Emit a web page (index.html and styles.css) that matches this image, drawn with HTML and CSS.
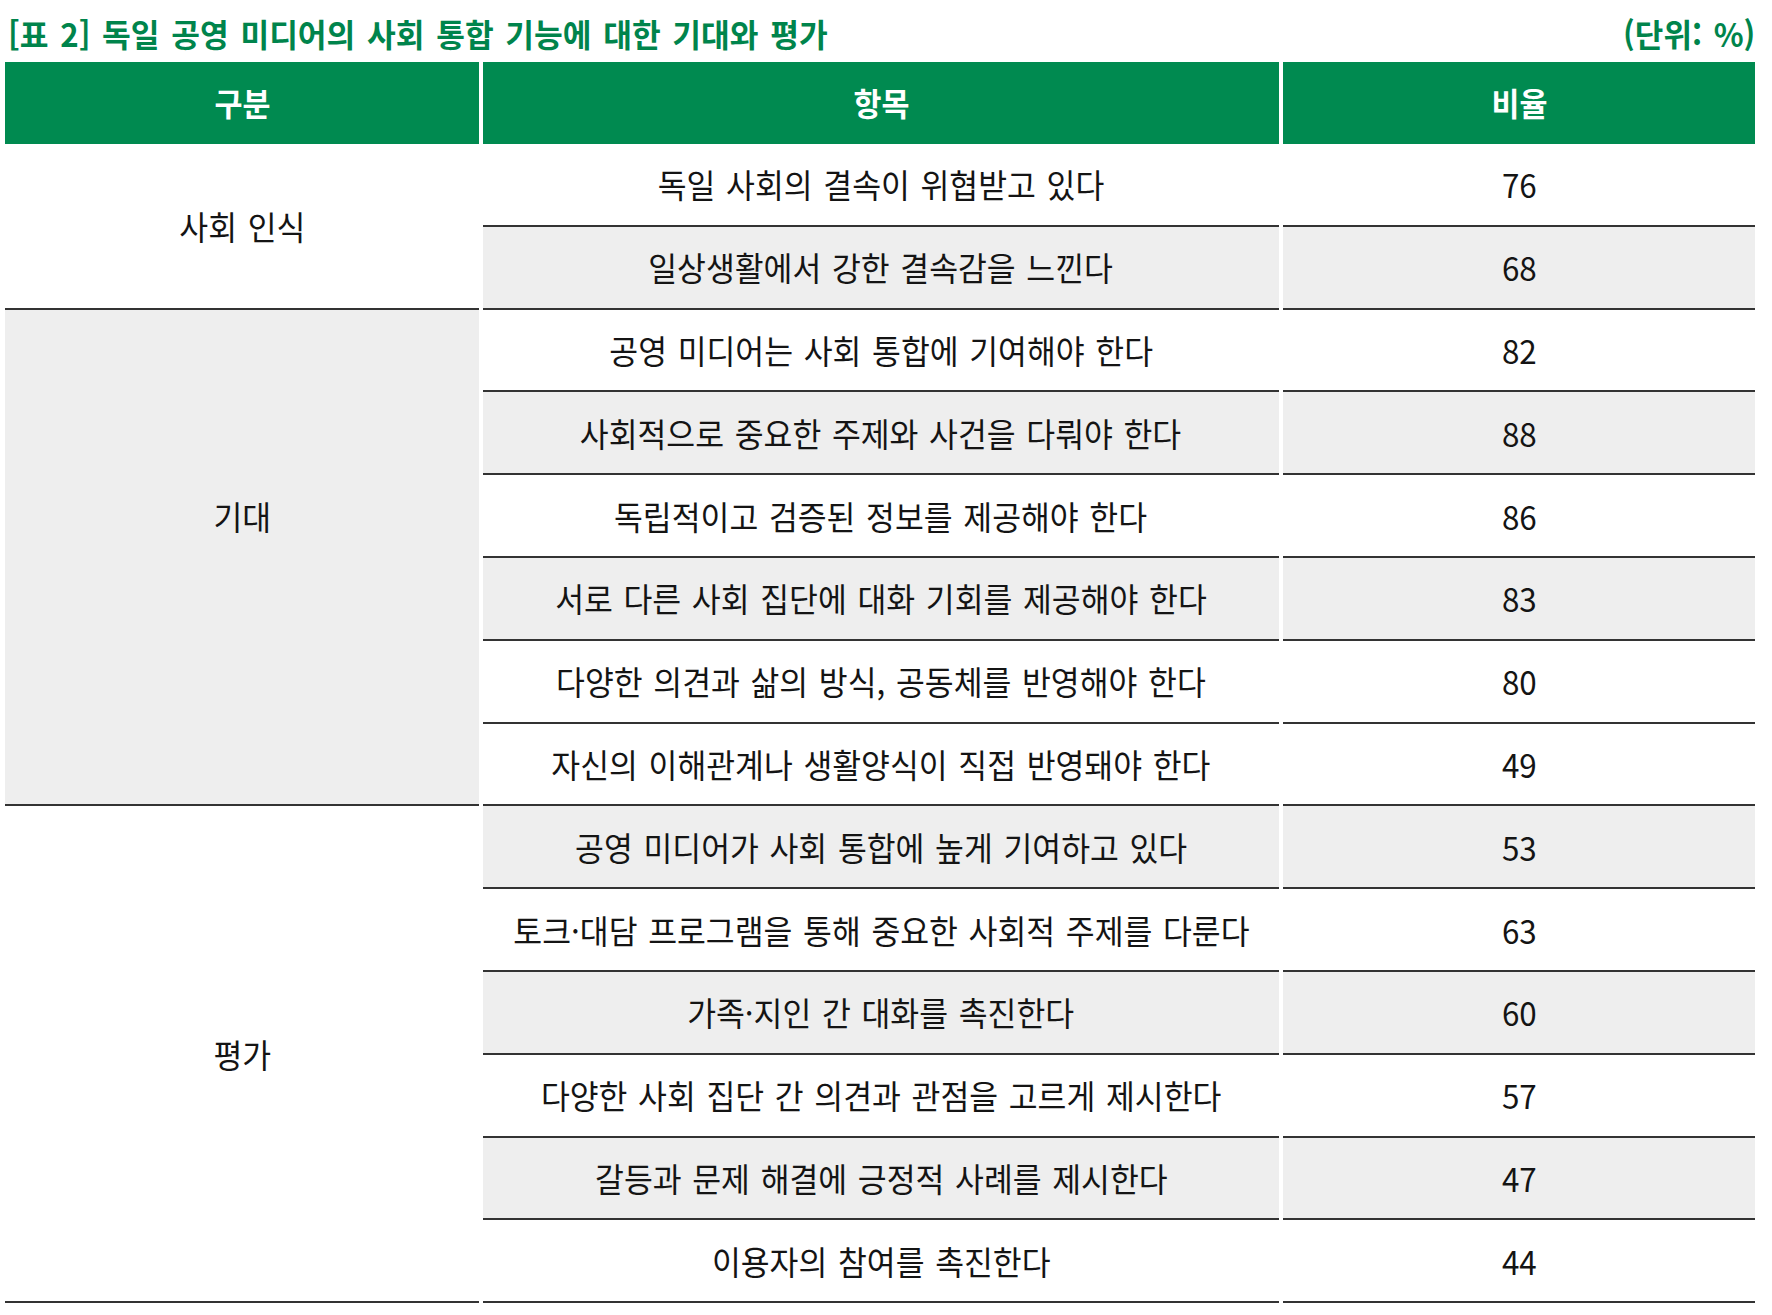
FILE: index.html
```html
<!DOCTYPE html>
<html lang="ko">
<head>
<meta charset="utf-8">
<title>표 2</title>
<link rel="stylesheet" href="styles.css">
</head>
<body>
<div class="page">
  <div class="caption">
    <span class="title"><span class="sq-l">[표 2] 독일 공영 미디어의 사회 통합 기능에 대한 기대와 평가</span></span>
    <span class="unit"><span class="sq-r">(단위: %)</span></span>
  </div>
  <div class="table">
    <div class="th"><span class="sq">구분</span></div>
    <div class="th"><span class="sq">항목</span></div>
    <div class="th"><span class="sq">비율</span></div>

    <div class="cat span2"><span class="sq">사회 인식</span></div>
    <div class="item"><span class="sq">독일 사회의 결속이 위협받고 있다</span></div>
    <div class="val"><span class="sq">76</span></div>
    <div class="item gray"><span class="sq">일상생활에서 강한 결속감을 느낀다</span></div>
    <div class="val gray"><span class="sq">68</span></div>

    <div class="cat span6 gray up"><span class="sq">기대</span></div>
    <div class="item"><span class="sq">공영 미디어는 사회 통합에 기여해야 한다</span></div>
    <div class="val"><span class="sq">82</span></div>
    <div class="item gray"><span class="sq">사회적으로 중요한 주제와 사건을 다뤄야 한다</span></div>
    <div class="val gray"><span class="sq">88</span></div>
    <div class="item"><span class="sq">독립적이고 검증된 정보를 제공해야 한다</span></div>
    <div class="val"><span class="sq">86</span></div>
    <div class="item gray"><span class="sq">서로 다른 사회 집단에 대화 기회를 제공해야 한다</span></div>
    <div class="val gray"><span class="sq">83</span></div>
    <div class="item"><span class="sq">다양한 의견과 삶의 방식, 공동체를 반영해야 한다</span></div>
    <div class="val"><span class="sq">80</span></div>
    <div class="item"><span class="sq">자신의 이해관계나 생활양식이 직접 반영돼야 한다</span></div>
    <div class="val"><span class="sq">49</span></div>

    <div class="cat span6"><span class="sq">평가</span></div>
    <div class="item gray"><span class="sq">공영 미디어가 사회 통합에 높게 기여하고 있다</span></div>
    <div class="val gray"><span class="sq">53</span></div>
    <div class="item"><span class="sq">토크·대담 프로그램을 통해 중요한 사회적 주제를 다룬다</span></div>
    <div class="val"><span class="sq">63</span></div>
    <div class="item gray"><span class="sq">가족·지인 간 대화를 촉진한다</span></div>
    <div class="val gray"><span class="sq">60</span></div>
    <div class="item"><span class="sq">다양한 사회 집단 간 의견과 관점을 고르게 제시한다</span></div>
    <div class="val"><span class="sq">57</span></div>
    <div class="item gray"><span class="sq">갈등과 문제 해결에 긍정적 사례를 제시한다</span></div>
    <div class="val gray"><span class="sq">47</span></div>
    <div class="item"><span class="sq">이용자의 참여를 촉진한다</span></div>
    <div class="val"><span class="sq">44</span></div>
  </div>
</div>
</body>
</html>
```

FILE: styles.css
```css
* { box-sizing: border-box; }

html, body {
  margin: 0;
  padding: 0;
  background: #ffffff;
}

body {
  font-family: "Noto Sans CJK KR", "Noto Sans", sans-serif;
  color: #141414;
}

.page {
  margin-left: 5px;
  width: 1750px;
}

.caption {
  height: 62px;
  display: flex;
  justify-content: space-between;
  align-items: center;
  padding: 4px 0 0 3px;
  color: #00844c;
  font-weight: 700;
  font-size: 32px;
  line-height: 32px;
  word-spacing: 3px;
}

.title, .unit {
  display: block;
  white-space: nowrap;
}

.sq-l, .sq-r, .sq {
  display: inline-block;
  white-space: nowrap;
}

.sq-l {
  transform: scaleX(0.976);
  transform-origin: left center;
}

.sq-r {
  transform: scaleX(0.97);
  transform-origin: right center;
}

.table {
  display: grid;
  grid-template-columns: 474px 796px 472px;
  grid-template-rows: 82px repeat(14, 82.8px);
  column-gap: 4px;
}

.th {
  background: #008a50;
  color: #ffffff;
  font-weight: 700;
  font-size: 32px;
  display: flex;
  align-items: center;
  justify-content: center;
  padding-bottom: 3px;
}

.th .sq {
  transform: scaleX(0.95);
}

.cat, .item, .val {
  display: flex;
  align-items: center;
  justify-content: center;
  border-bottom: 2px solid #333333;
  background: #ffffff;
  font-size: 33px;
  font-weight: 400;
  word-spacing: 2px;
}

.cat .sq, .item .sq, .val .sq {
  transform: scaleX(0.95);
}

.span2 { grid-row: span 2; }
.span6 { grid-row: span 6; }

.up { padding-bottom: 82.8px; }

.gray { background: #eeeeee; }
```
